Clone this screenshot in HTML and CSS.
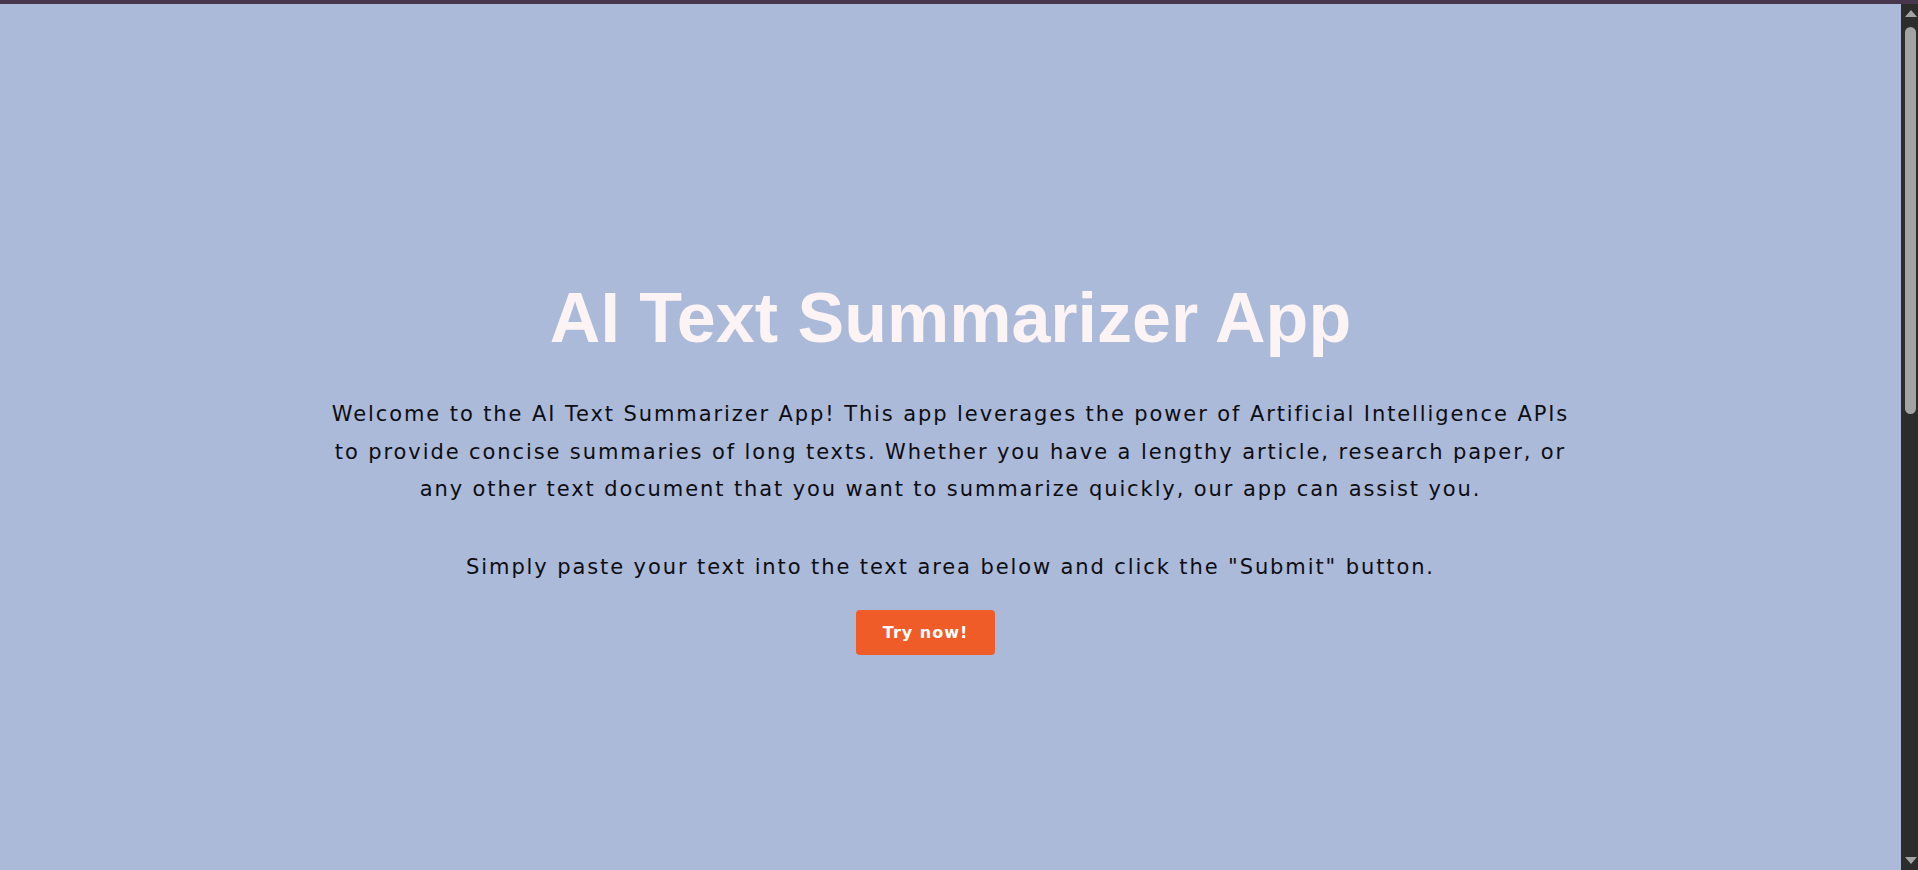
FILE: index.html
```html
<!DOCTYPE html>
<html lang="en">
<head>
<meta charset="utf-8">
<title>AI Text Summarizer App</title>
<link rel="stylesheet" href="styles.css">
</head>
<body>
<div class="topbar"></div>
<div class="window">
  <main class="page">
    <section class="hero">
      <h1 class="hero-title">AI Text Summarizer App</h1>
      <p class="hero-text">Welcome to the AI Text Summarizer App! This app leverages the power of Artificial Intelligence APIs to provide concise summaries of long texts. Whether you have a lengthy article, research paper, or any other text document that you want to summarize quickly, our app can assist you.</p>
      <p class="hero-text hero-text-second">Simply paste your text into the text area below and click the "Submit" button.</p>
      <div class="cta-row"><a class="cta" href="#summarizer">Try now!</a></div>
    </section>
  </main>
  <div class="scrollbar" aria-hidden="true">
    <div class="scrollbar-arrow scrollbar-arrow-up"></div>
    <div class="scrollbar-thumb"></div>
    <div class="scrollbar-arrow scrollbar-arrow-down"></div>
  </div>
</div>
</body>
</html>
```

FILE: styles.css
```css
html, body {
  margin: 0;
  padding: 0;
  height: 100%;
  overflow: hidden;
}

body {
  display: flex;
  flex-direction: column;
  background: #abbad9;
  font-family: "DejaVu Sans", Verdana, sans-serif;
  color: #111111;
}

.topbar {
  flex: 0 0 4px;
  background: #48364d;
}

.window {
  flex: 1 1 auto;
  display: flex;
  min-height: 0;
}

.page {
  flex: 1 1 auto;
  min-width: 0;
  overflow: hidden;
  background: #abbad9;
}

.hero {
  box-sizing: border-box;
  padding-top: 274px;
  display: flex;
  flex-direction: column;
  align-items: center;
  text-align: center;
}

.hero-title {
  margin: 0 0 38px;
  font-family: "Liberation Sans", Arial, sans-serif;
  font-weight: bold;
  font-size: 70px;
  line-height: 80px;
  color: #fbf3f4;
}

.hero-text {
  margin: 0;
  width: 1252px;
  font-size: 21px;
  line-height: 37.5px;
  letter-spacing: 1.9px;
  color: #0d0d12;
}

.hero-text-second {
  margin-top: 40px;
}

.cta-row {
  margin-top: 24px;
  text-align: center;
}

.cta {
  display: inline-block;
  margin-right: 50px;
  padding: 13px 27px;
  background: #f05c28;
  color: #ffffff;
  border-radius: 4px;
  font-family: "DejaVu Sans", Verdana, sans-serif;
  font-weight: bold;
  font-size: 16px;
  line-height: 19px;
  letter-spacing: 1px;
  text-decoration: none;
}

.scrollbar {
  flex: 0 0 17px;
  display: flex;
  flex-direction: column;
  align-items: center;
  background: #2c2c2c;
}

.scrollbar-arrow {
  flex: 0 0 auto;
  width: 0;
  height: 0;
  margin-left: 2px;
  border-left: 6px solid transparent;
  border-right: 6px solid transparent;
}

.scrollbar-arrow-up {
  margin-top: 6px;
  border-bottom: 7px solid #a3a3a3;
}

.scrollbar-arrow-down {
  margin-top: auto;
  margin-bottom: 6px;
  border-top: 7px solid #a3a3a3;
}

.scrollbar-thumb {
  flex: 0 0 auto;
  width: 11px;
  height: 387px;
  margin-top: 10px;
  margin-left: 2px;
  border-radius: 5.5px;
  background: #a3a3a3;
}
```
